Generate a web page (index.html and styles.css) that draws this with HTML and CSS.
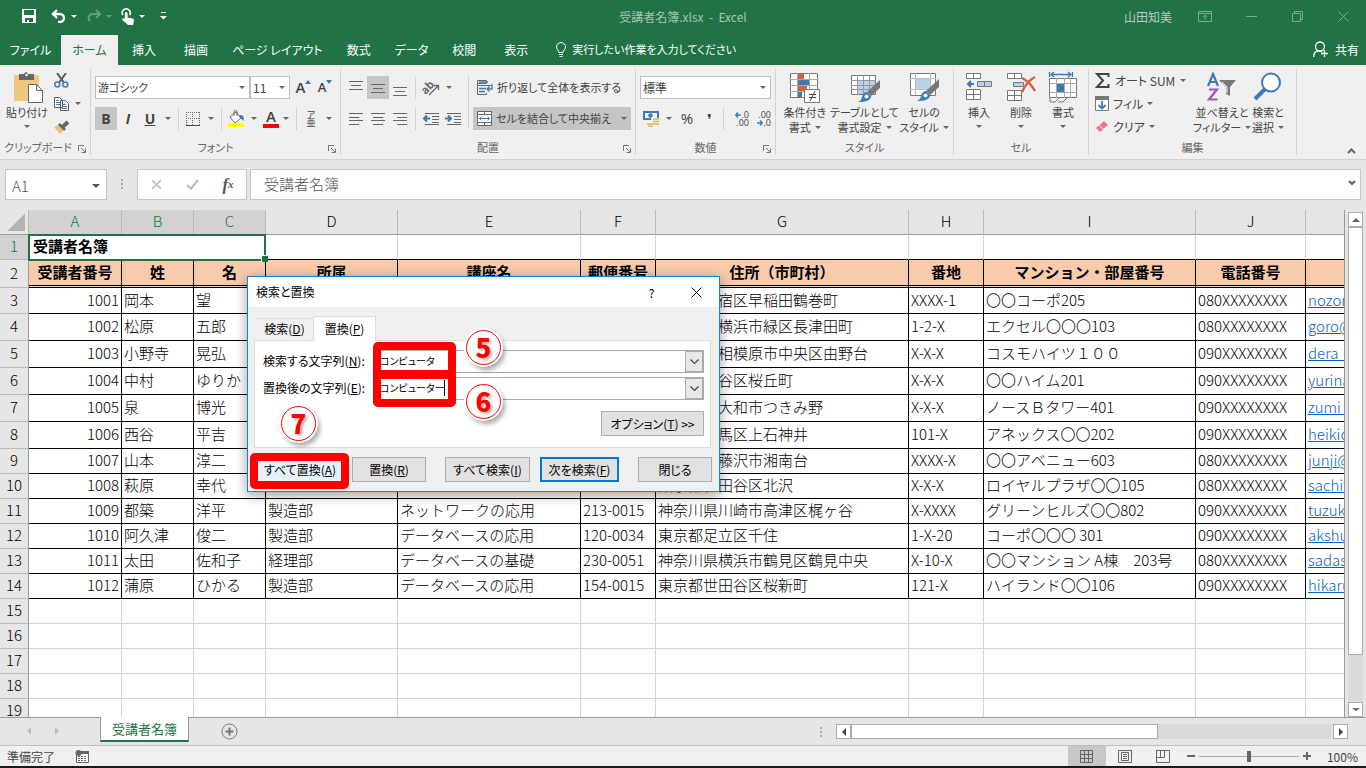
FILE: index.html
```html
<!DOCTYPE html>
<html lang="ja">

<head>
  <meta charset="UTF-8">
  <meta name="viewport" content="width=device-width, initial-scale=1.0">
  <title>受講者名簿.xlsx - Excel</title>
  <link rel="stylesheet" href="styles.css">
</head>

<body>
  <header class="titlebar">
    <div class="quick-access">
      <button title="上書き保存"><svg width="14" height="14" viewBox="0 0 14 14"><path fill="#fff" fill-rule="evenodd" d="M0 0h14v14H0zM2 1v5h10V1zM3 9v4h2v-2h2v2h4V9z"/></svg></button>
      <button title="元に戻す"><svg width="16" height="14" viewBox="0 0 16 14"><path d="M6 1L2 5l4 4M2 5h7a4 4 0 0 1 0 8H7" fill="none" stroke="#fff" stroke-width="2.4"/></svg><i class="arrow"></i></button>
      <button class="faded" title="やり直し"><svg width="16" height="14" viewBox="0 0 16 14"><path d="M10 1l4 4-4 4M14 5H7a4 4 0 0 0-3 7" fill="none" stroke="#fff" stroke-width="2"/></svg><i class="arrow"></i></button>
      <button title="タッチ/マウス モードの切り替え"><svg width="14" height="17" viewBox="0 0 14 17"><path d="M1.800 7a4 4 0 1 1 6.800 0" fill="none" stroke="#fff" stroke-width="1.600"/><path d="M3.800 5q1.400-2 2.800 0v4.500l5 1q1.400.3 1.400 2L12 17H7l-6-5.500 1-1.500 1.800 1z" fill="#fff"/></svg><i class="arrow"></i></button>
      <button title="カスタマイズ"><svg width="7" height="8" viewBox="0 0 7 8"><path d="M1 0h5v1H1zM0 4h7L3.500 7.500z" fill="#fff"/></svg></button>
    </div>
    <div class="window-title">受講者名簿.xlsx&nbsp; -&nbsp; Excel</div>
    <div class="window-buttons">
      <span class="user">山田知美</span>
      <button title="リボンの表示オプション"><svg width="14" height="11" viewBox="0 0 14 11"><path d="M.5.5h13v10H.5zM1 2.500h12M7 9V4M5 6l2-2 2 2" fill="none" stroke="currentColor"/></svg></button>
      <button title="最小化"><svg width="11" height="11" viewBox="0 0 11 11"><path d="M0 5.500h11" stroke="currentColor"/></svg></button>
      <button title="元に戻す (縮小)"><svg width="11" height="11" viewBox="0 0 11 11"><path d="M.5 2.500h8v8h-8zM2.500 2V.5h8v8H9" fill="none" stroke="currentColor"/></svg></button>
      <button title="閉じる"><svg width="11" height="11" viewBox="0 0 11 11"><path d="M.5.5l10 10M10.500.5l-10 10" stroke="currentColor"/></svg></button>
    </div>
  </header>

  <nav class="tabs">
    <button>ファイル</button>
    <button class="active">ホーム</button>
    <button>挿入</button>
    <button>描画</button>
    <button>ページ レイアウト</button>
    <button>数式</button>
    <button>データ</button>
    <button>校閲</button>
    <button>表示</button>
    <button class="tell-me"><svg width="10" height="15" viewBox="0 0 10 15"><path d="M3 10.500c0-2-2.500-3-2.500-5.500a4.500 4.500 0 0 1 9 0c0 2.500-2.500 3.500-2.500 5.500zM3 12.500h4M3.500 14.500h3" fill="none" stroke="#fff"/></svg>実行したい作業を入力してください</button>
    <button class="share"><svg width="16" height="17" viewBox="0 0 16 17"><circle cx="7" cy="5.500" r="4.500" fill="none" stroke="#fff" stroke-width="1.300"/><path d="M.7 16c0-4 2-6 5-6 1.500 0 2.500.4 3.500 1M11.500 9v7M8 12.500h7" fill="none" stroke="#fff" stroke-width="1.300"/></svg>共有</button>
  </nav>

  <section class="ribbon">
    <div class="group clipboard">
      <div class="group-body">
        <button class="big paste">
          <svg width="32" height="32" viewBox="0 0 32 32"><path d="M3 4h25v26H3z" fill="#edc87e"/><path d="M8 3h5q2-4 4 0h6v6H8z" fill="#666"/><circle cx="15.500" cy="4" r="1.300" fill="#fff"/><path d="M17.500 13.500h8l6 6v12h-14z" fill="#fff" stroke="#666"/><path d="M25.500 13.500v6h6" fill="none" stroke="#666"/></svg>
          <span>貼り付け</span><i class="arrow"></i>
        </button>
        <div class="stack">
          <button title="切り取り"><svg width="15" height="15" viewBox="0 0 15 15"><path d="M3 0l6.500 9M12 0L5.500 9" stroke="#5b5b5b" stroke-width="2"/><circle cx="3.200" cy="11.500" r="2.500" fill="none" stroke="#3f7ab5" stroke-width="1.500"/><circle cx="11.300" cy="11.500" r="2.500" fill="none" stroke="#3f7ab5" stroke-width="1.500"/></svg></button>
          <button title="コピー"><svg width="15" height="14" viewBox="0 0 15 14"><path d="M.5.5h5l3 3v7h-8zM6.500 3.500h5l3 3v7h-8z" fill="#fff" stroke="#5b5b5b"/><path d="M2 3.500h3M2 5.500h4M2 7.500h4M8 7.500h4M8 9.500h5M8 11.500h5" stroke="#3f7ab5"/></svg><i class="arrow"></i></button>
          <button title="書式のコピー"><svg width="16" height="14" viewBox="0 0 16 14"><path d="M0 7l5-2 5 5-4 4z" fill="#edc07a"/><path d="M5 4l6 6" stroke="#666" stroke-width="2.500"/><path d="M9 6.500l5-4.500" stroke="#666" stroke-width="4"/></svg></button>
        </div>
      </div>
      <div class="group-name">クリップボード<svg class="launcher" width="8" height="8" viewBox="0 0 8 8"><path d="M.5 6V.5H6M3 3l4 4M7.500 3.500v4h-4" fill="none" stroke="#777"/></svg></div>
    </div>

    <div class="group font">
      <div class="group-body rows">
        <div class="row">
          <span class="select font-name"><select aria-label="フォント"><option>游ゴシック</option></select><i class="arrow"></i></span>
          <span class="select font-size"><select aria-label="フォント サイズ"><option>11</option></select><i class="arrow"></i></span>
          <button class="tool grow">A<svg width="6" height="4" viewBox="0 0 6 4"><path d="M0 4l3-4 3 4z" fill="#3f7ab5"/></svg></button>
          <button class="tool grow shrink">A<svg width="6" height="4" viewBox="0 0 6 4"><path d="M0 0h6L3 4z" fill="#3f7ab5"/></svg></button>
        </div>
        <div class="row">
          <button class="tool pressed"><b>B</b></button>
          <button class="tool italic"><b>I</b></button>
          <button class="tool"><b><u>U</u></b></button>
          <button class="drop" aria-label="下線"><i class="arrow"></i></button>
          <span class="sep"></span>
          <button class="tool" title="罫線"><svg width="14" height="14" viewBox="0 0 14 14"><path d="M0 .5h14M0 6.500h14M.5 0v13M6.500 0v13M13.500 0v13" stroke="#666" stroke-dasharray="1 1"/><path d="M0 13.500h14" stroke="#444"/></svg></button>
          <button class="drop" aria-label="罫線"><i class="arrow"></i></button>
          <span class="sep"></span>
          <button class="tool" title="塗りつぶしの色"><svg width="17" height="17" viewBox="0 0 17 17"><path d="M2 7l6-5 5 6-6 5z" fill="#fff" stroke="#666"/><path d="M6 6V2a1.500 1.500 0 0 1 3 0v4" fill="none" stroke="#666"/><path d="M11 5q6-1 4.500 6l-3-3z" fill="#3f7ab5"/><path d="M0 13h16v4H0z" fill="#ff0"/></svg></button>
          <button class="drop" aria-label="塗りつぶしの色"><i class="arrow"></i></button>
          <button class="tool font-color" title="フォントの色">A</button>
          <button class="drop" aria-label="フォントの色"><i class="arrow"></i></button>
          <span class="sep"></span>
          <button class="tool ruby"><span>ア</span><span>亜</span></button>
          <button class="drop" aria-label="ふりがな"><i class="arrow"></i></button>
        </div>
      </div>
      <div class="group-name">フォント<svg class="launcher" width="8" height="8" viewBox="0 0 8 8"><path d="M.5 6V.5H6M3 3l4 4M7.500 3.500v4h-4" fill="none" stroke="#777"/></svg></div>
    </div>

    <div class="group alignment">
      <div class="group-body">
        <div class="rows">
          <div class="row">
            <button class="tool" title="上揃え"><svg width="14" height="16" viewBox="0 0 14 16"><path d="M0 1.500h14M2 5.500h10M0 9.500h14" stroke="#666"/></svg></button>
            <button class="tool pressed" title="上下中央揃え"><svg width="14" height="16" viewBox="0 0 14 16"><path d="M0 4.500h14M2 8.500h10M0 12.500h14" stroke="#666"/></svg></button>
            <button class="tool" title="下揃え"><svg width="14" height="16" viewBox="0 0 14 16"><path d="M0 7.500h14M2 11.500h10M0 15.500h14" stroke="#666"/></svg></button>
            <span class="sep"></span>
            <button class="tool" title="方向"><svg class="orientation" width="17" height="16" viewBox="0 0 17 16"><text x="0" y="11" transform="rotate(-45 6 10)" font-size="11" font-weight="700" fill="#666">ab</text><path d="M6 15l9-9M11 5.500h4.500V10" fill="none" stroke="#666" stroke-width="1.300"/></svg></button>
            <button class="drop" aria-label="方向"><i class="arrow"></i></button>
          </div>
          <div class="row">
            <button class="tool" title="左揃え"><svg width="14" height="12" viewBox="0 0 14 12"><path d="M0 .5h14M0 4.500h10M0 7.500h14M0 11.500h10" stroke="#666"/></svg></button>
            <button class="tool" title="中央揃え"><svg width="14" height="12" viewBox="0 0 14 12"><path d="M0 .5h14M2 4.500h10M0 7.500h14M2 11.500h10" stroke="#666"/></svg></button>
            <button class="tool" title="右揃え"><svg width="14" height="12" viewBox="0 0 14 12"><path d="M0 .5h14M4 4.500h10M0 7.500h14M4 11.500h10" stroke="#666"/></svg></button>
            <span class="sep"></span>
            <button class="tool" title="インデントを減らす"><svg width="16" height="14" viewBox="0 0 16 14"><path d="M2 1.500h14M9 4.500h7M9 7.500h7M9 10.500h7M2 12.500h14" stroke="#666"/><path d="M7 6.500H1M4 3.500l-3 3 3 3" fill="none" stroke="#3f7ab5" stroke-width="2"/></svg></button>
            <button class="tool" title="インデントを増やす"><svg width="16" height="14" viewBox="0 0 16 14"><path d="M2 1.500h14M9 4.500h7M9 7.500h7M9 10.500h7M2 12.500h14" stroke="#666"/><path d="M0 6.500h6M3 3.500l3 3-3 3" fill="none" stroke="#3f7ab5" stroke-width="2"/></svg></button>
          </div>
        </div>
        <span class="sep tall"></span>
        <div class="rows wide">
          <button class="labelled"><svg width="16" height="16" viewBox="0 0 16 16"><path d="M.5.500h9v3h-9zM.5 7V14.500h9V13" fill="none" stroke="#666"/><path d="M0 5.500h14M.5 3v8" stroke="#666"/><path d="M2 2h9M2 8.500h7M2 11.500h6M15 4v5h-4M12.500 6.500L10 9l2.500 2.500" fill="none" stroke="#3f7ab5" stroke-width="1.300"/></svg>折り返して全体を表示する</button>
          <button class="labelled pressed"><svg width="15" height="15" viewBox="0 0 15 15"><path d="M.5.5h14v14H.5zM0 3.500h15M0 11.500h15M7.500 0v3.500M7.500 11.500V15" fill="#fff" stroke="#666"/><path d="M2 7.500h11M4.500 5.500l-2 2 2 2M10.500 5.500l2 2-2 2" fill="none" stroke="#3f7ab5"/></svg>セルを結合して中央揃え<i class="arrow"></i></button>
        </div>
      </div>
      <div class="group-name">配置<svg class="launcher" width="8" height="8" viewBox="0 0 8 8"><path d="M.5 6V.5H6M3 3l4 4M7.500 3.500v4h-4" fill="none" stroke="#777"/></svg></div>
    </div>

    <div class="group number">
      <div class="group-body rows">
        <div class="row">
          <span class="select format"><select aria-label="表示形式"><option>標準</option></select><i class="arrow"></i></span>
        </div>
        <div class="row">
          <button class="tool" title="通貨表示形式"><svg width="17" height="16" viewBox="0 0 17 16"><path d="M0 0h16v9H0z" fill="#3f7ab5"/><path d="M2 2h12v5H2z" fill="#fff"/><circle cx="7.500" cy="4.500" r="2.300" fill="#3f7ab5"/><path d="M8 7h8v9H4v-4h4z" fill="#f0f0f0"/><path d="M10 8h6M10 10.500h6M10 13h6M4 13h6M5 15.200h5" stroke="#e5b25d" stroke-width="1.600"/></svg></button>
          <button class="drop" aria-label="通貨"><i class="arrow"></i></button>
          <button class="tool percent">%</button>
          <button class="tool comma">❜</button>
          <span class="sep"></span>
          <button class="tool decimal"><span><svg width="6" height="6" viewBox="0 0 6 6"><path d="M6 3H1M3 .5L.7 3 3 5.500" fill="none" stroke="#3f7ab5" stroke-width="1.400"/></svg>.0</span><span>.00</span></button>
          <button class="tool decimal"><span>.00</span><span><svg width="6" height="6" viewBox="0 0 6 6"><path d="M0 3h5M3 .5L5.300 3 3 5.500" fill="none" stroke="#3f7ab5" stroke-width="1.400"/></svg>.0</span></button>
        </div>
      </div>
      <div class="group-name">数値<svg class="launcher" width="8" height="8" viewBox="0 0 8 8"><path d="M.5 6V.5H6M3 3l4 4M7.500 3.500v4h-4" fill="none" stroke="#777"/></svg></div>
    </div>

    <div class="group styles">
      <div class="group-body">
        <button class="big">
          <svg width="32" height="32" viewBox="0 0 32 32"><path d="M1.500 2.500h27v24h-27z" fill="#fff" stroke="#777"/><path d="M1 8.500h28M1 14.500h28M1 20.500h28M8.500 2v24M20.500 2v24" stroke="#aaa"/><path d="M9 3h6v5H9zM9 15h9v5H9z" fill="#d65f3c"/><path d="M9 9h11v5H9zM9 21h4v5H9z" fill="#3f7ab5"/><path d="M15.500 18.500h15v13h-15z" fill="#fff" stroke="#777"/><path d="M20 23.500h7M20 26.500h7M26 20l-5 10" stroke="#444" fill="none"/></svg>
          <span>条件付き</span><span>書式<i class="arrow"></i></span>
        </button>
        <button class="big mid">
          <svg width="32" height="32" viewBox="0 0 32 32"><path d="M2.500 4.500h24v19h-24z" fill="#fff" stroke="#777"/><path d="M9 10h17v13H9z" fill="#bcd0e8"/><path d="M2 9.500h25M2 14.500h25M2 18.500h25M8.500 4v20M14.500 4v20M20.500 4v20" stroke="#999"/><path d="M31 9v8l-9 8-4-4z" fill="#777"/><path d="M18 21l4 4q0 6-13 6 4-2 4-5 1-5 5-5z" fill="#3f7ab5"/><circle cx="17.500" cy="25.500" r="2" fill="#fff"/></svg>
          <span>テーブルとして</span><span>書式設定<i class="arrow"></i></span>
        </button>
        <button class="big">
          <svg width="32" height="32" viewBox="0 0 32 32"><path d="M2.500 2.500h25v22h-25z" fill="#fff" stroke="#777"/><path d="M2 7.500h26M2 18.500h26M7.500 2v22M22.500 2v22" stroke="#bbb"/><path d="M8 8h14v10H8z" fill="#bcd0e8"/><path d="M31 8v8l-9 8-4-4z" fill="#777"/><path d="M18 20l4 4q0 6-13 6 4-2 4-5 1-5 5-5z" fill="#3f7ab5"/><circle cx="17.500" cy="24.500" r="2" fill="#fff"/></svg>
          <span>セルの</span><span>スタイル<i class="arrow"></i></span>
        </button>
      </div>
      <div class="group-name">スタイル</div>
    </div>

    <div class="group cells">
      <div class="group-body">
        <button class="big narrow">
          <svg width="32" height="32" viewBox="0 0 32 32"><path d="M3.500 2.500h14v5h-14zM10.500 2.500v5M3.500 18.500h14v10h-14zM10.500 18.500v10M3.500 23.500h14" fill="#fff" stroke="#777"/><path d="M14.500 10.500h14v5h-14zM21.500 10.500v5" fill="#bcd0e8" stroke="#777"/><path d="M11 13H5M8 10l-3 3 3 3" fill="none" stroke="#3f7ab5" stroke-width="2"/></svg>
          <span>挿入</span><i class="arrow"></i>
        </button>
        <button class="big narrow">
          <svg width="32" height="32" viewBox="0 0 32 32"><path d="M2.500 2.500h14v5h-14zM9.500 2.500v5M2.500 19.500h14v10h-14zM9.500 19.500v10M2.500 24.500h14" fill="#fff" stroke="#777"/><path d="M8.500 11.500h10v4h-10z" fill="#bcd0e8" stroke="#777"/><path d="M17 7q8 4 13 13M30 6q-8 4-13 15" fill="none" stroke="#d65f3c" stroke-width="2.500"/></svg>
          <span>削除</span><i class="arrow"></i>
        </button>
        <button class="big narrow">
          <svg width="32" height="32" viewBox="0 0 32 32"><path d="M2.500 1v5M25.500 1v5M4 3.500h20M7 1L4 3.500 7 6M21 1l3 2.500L21 6" fill="none" stroke="#3f7ab5" stroke-width="1.300"/><path d="M2.500 7.500h27v19h-27z" fill="#fff" stroke="#777"/><path d="M2 12.500h28M2 21.500h28M9.500 7v20M17.500 7v20M23.500 7v20" stroke="#aaa"/><path d="M10 13h7v8h-7z" fill="#3f7ab5"/><path d="M3 27v4h5l4-4M11 31h5l4-4" fill="none" stroke="#777"/></svg>
          <span>書式</span><i class="arrow"></i>
        </button>
      </div>
      <div class="group-name">セル</div>
    </div>

    <div class="group editing">
      <div class="group-body">
        <div class="stack">
          <button><svg width="15" height="15" viewBox="0 0 15 15"><path d="M13.500 4V1H2l6 6.500L2 14h11.500v-3" fill="none" stroke="#444" stroke-width="2"/></svg>オート SUM<i class="arrow"></i></button>
          <button><svg width="14" height="15" viewBox="0 0 14 15"><path d="M.5.5h13v14H.5z" fill="#fff" stroke="#777"/><path d="M0 0h14v4H0z" fill="#777"/><path d="M7 5v8M3.500 9L7 12.500 10.500 9" fill="none" stroke="#3f7ab5" stroke-width="1.800"/></svg>フィル<i class="arrow"></i></button>
          <button><svg width="14" height="13" viewBox="0 0 14 13"><path d="M1 8l8-7 4 4-8 7z" fill="#e8798d"/><path d="M4 5l4.500 4.500" stroke="#f0f0f0"/></svg>クリア<i class="arrow"></i></button>
        </div>
        <button class="big">
          <svg width="32" height="32" viewBox="0 0 32 32"><path d="M2 15L7 3l5 12M4 11h6" fill="none" stroke="#3f7ab5" stroke-width="2.200"/><path d="M3 18.500h8L3 28.500h8.500" fill="none" stroke="#9b59b6" stroke-width="2.200"/><path d="M13 9h17l-6 7v9l-4-2v-7z" fill="#777"/><path d="M16 11l5 5v6" stroke="#fff" fill="none"/></svg>
          <span>並べ替えと</span><span>フィルター<i class="arrow"></i></span>
        </button>
        <button class="big narrow">
          <svg width="32" height="32" viewBox="0 0 32 32"><path d="M3 28l10-10" stroke="#3f7ab5" stroke-width="4"/><circle cx="19" cy="11.500" r="9" fill="#fff" stroke="#3f7ab5" stroke-width="2"/></svg>
          <span>検索と</span><span>選択<i class="arrow"></i></span>
        </button>
      </div>
      <div class="group-name">編集</div>
    </div>
    <button class="collapse" title="リボンを折りたたむ"><svg width="9" height="6" viewBox="0 0 9 6"><path d="M1 5l3.500-3.500L8 5" fill="none" stroke="#666" stroke-width="2"/></svg></button>
  </section>

  <section class="formula-bar">
    <div class="name-box"><input type="text" aria-label="名前ボックス" value="A1"><i class="arrow"></i></div>
    <span class="dots"></span>
    <div class="formula-buttons">
      <button title="キャンセル"><svg width="11" height="11" viewBox="0 0 11 11"><path d="M1 1l9 9M10 1l-9 9" stroke="#bbb" stroke-width="1.500"/></svg></button>
      <button title="入力"><svg width="13" height="11" viewBox="0 0 13 11"><path d="M1 6l4 3.500L12 1" fill="none" stroke="#bbb" stroke-width="2"/></svg></button>
      <button class="fx" title="関数の挿入">f<small>x</small></button>
    </div>
    <div class="formula-input"><input type="text" aria-label="数式バー" value="受講者名簿"><svg width="8" height="6" viewBox="0 0 8 6"><path d="M1 1l3 3 3-3" fill="none" stroke="#666" stroke-width="2"/></svg></div>
  </section>

  <main class="sheet">
    <div class="grid">
      <table>
        <colgroup>
          <col class="c-head"><col class="c-a"><col class="c-b"><col class="c-b"><col class="c-d"><col class="c-e"><col class="c-f"><col class="c-g"><col class="c-f"><col class="c-i"><col class="c-j"><col class="c-k">
        </colgroup>
        <thead>
          <tr>
            <th class="corner"></th>
            <th class="selected">A</th><th class="selected">B</th><th class="selected">C</th>
            <th>D</th><th>E</th><th>F</th><th>G</th><th>H</th><th>I</th><th>J</th><th></th>
          </tr>
        </thead>
        <tbody>
          <tr class="title-row"><th class="selected">1</th><td class="active-cell" colspan="3">受講者名簿</td><td></td><td></td><td></td><td></td><td></td><td></td><td></td><td></td></tr>
          <tr class="heading-row"><th>2</th><td>受講者番号</td><td>姓</td><td>名</td><td>所属</td><td>講座名</td><td>郵便番号</td><td>住所（市町村）</td><td>番地</td><td>マンション・部屋番号</td><td>電話番号</td><td></td></tr>
          <tr class="data third"><th>3</th><td>1001</td><td>岡本</td><td>望</td><td></td><td></td><td></td><td>東京都新宿区早稲田鶴巻町</td><td>XXXX-1</td><td>〇〇コーポ205</td><td>080XXXXXXXX</td><td><a href="#">nozomi@</a></td></tr>
          <tr class="data high"><th>4</th><td>1002</td><td>松原</td><td>五郎</td><td></td><td></td><td></td><td>神奈川県横浜市緑区長津田町</td><td>1-2-X</td><td>エクセル〇〇〇103</td><td>080XXXXXXXX</td><td><a href="#">goro@</a></td></tr>
          <tr class="data high"><th>5</th><td>1003</td><td>小野寺</td><td>晃弘</td><td></td><td></td><td></td><td>神奈川県相模原市中央区由野台</td><td>X-X-X</td><td>コスモハイツ１００</td><td>090XXXXXXXX</td><td><a href="#">dera_a</a></td></tr>
          <tr class="data high"><th>6</th><td>1004</td><td>中村</td><td>ゆりか</td><td></td><td></td><td></td><td>東京都渋谷区桜丘町</td><td>X-X-X</td><td>〇〇ハイム201</td><td>090XXXXXXXX</td><td><a href="#">yurina@</a></td></tr>
          <tr class="data high"><th>7</th><td>1005</td><td>泉</td><td>博光</td><td></td><td></td><td></td><td>神奈川県大和市つきみ野</td><td>X-X-X</td><td>ノースＢタワー401</td><td>090XXXXXXXX</td><td><a href="#">zumi_h</a></td></tr>
          <tr class="data high"><th>8</th><td>1006</td><td>西谷</td><td>平吉</td><td></td><td></td><td></td><td>東京都練馬区上石神井</td><td>101-X</td><td>アネックス〇〇202</td><td>090XXXXXXXX</td><td><a href="#">heikichi</a></td></tr>
          <tr class="data"><th>9</th><td>1007</td><td>山本</td><td>淳二</td><td></td><td></td><td></td><td>神奈川県藤沢市湘南台</td><td>XXXX-X</td><td>〇〇アベニュー603</td><td>080XXXXXXXX</td><td><a href="#">junji@</a></td></tr>
          <tr class="data"><th>10</th><td>1008</td><td>萩原</td><td>幸代</td><td></td><td></td><td></td><td>東京都世田谷区北沢</td><td>X-X-X</td><td>ロイヤルプラザ〇〇105</td><td>080XXXXXXXX</td><td><a href="#">sachiyo</a></td></tr>
          <tr class="data"><th>11</th><td>1009</td><td>都築</td><td>洋平</td><td>製造部</td><td>ネットワークの応用</td><td>213-0015</td><td>神奈川県川崎市高津区梶ヶ谷</td><td>X-XXXX</td><td>グリーンヒルズ〇〇802</td><td>090XXXXXXXX</td><td><a href="#">tuzuki@</a></td></tr>
          <tr class="data"><th>12</th><td>1010</td><td>阿久津</td><td>俊二</td><td>製造部</td><td>データベースの応用</td><td>120-0034</td><td>東京都足立区千住</td><td>1-X-20</td><td>コーポ〇〇〇 301</td><td>090XXXXXXXX</td><td><a href="#">akshun</a></td></tr>
          <tr class="data"><th>13</th><td>1011</td><td>太田</td><td>佐和子</td><td>経理部</td><td>データベースの基礎</td><td>230-0051</td><td>神奈川県横浜市鶴見区鶴見中央</td><td>X-10-X</td><td>〇〇マンション A棟　203号</td><td>080XXXXXXXX</td><td><a href="#">sadasa</a></td></tr>
          <tr class="data"><th>14</th><td>1012</td><td>蒲原</td><td>ひかる</td><td>製造部</td><td>データベースの応用</td><td>154-0015</td><td>東京都世田谷区桜新町</td><td>121-X</td><td>ハイランド〇〇106</td><td>090XXXXXXXX</td><td><a href="#">hikaru@</a></td></tr>
          <tr><th>15</th><td></td><td></td><td></td><td></td><td></td><td></td><td></td><td></td><td></td><td></td><td></td></tr>
          <tr><th>16</th><td></td><td></td><td></td><td></td><td></td><td></td><td></td><td></td><td></td><td></td><td></td></tr>
          <tr><th>17</th><td></td><td></td><td></td><td></td><td></td><td></td><td></td><td></td><td></td><td></td><td></td></tr>
          <tr><th>18</th><td></td><td></td><td></td><td></td><td></td><td></td><td></td><td></td><td></td><td></td><td></td></tr>
          <tr><th>19</th><td></td><td></td><td></td><td></td><td></td><td></td><td></td><td></td><td></td><td></td><td></td></tr>
        </tbody>
      </table>
    </div>
    <div class="vscroll">
      <button aria-label="上へ"><i class="arrow up"></i></button>
      <div class="track"><div class="thumb"></div></div>
      <button aria-label="下へ"><i class="arrow"></i></button>
    </div>
  </main>

  <div class="sheet-tabs">
    <div class="sheet-nav"><i class="arrow left"></i><i class="arrow right"></i></div>
    <button class="sheet-tab">受講者名簿</button>
    <div class="sheet-rest">
      <button class="add-sheet" title="新しいシート"><svg width="17" height="17" viewBox="0 0 17 17"><circle cx="8.500" cy="8.500" r="7.500" fill="none" stroke="#777"/><path d="M4.500 8.500h8M8.500 4.500v8" stroke="#777" stroke-width="2"/></svg></button>
      <span class="dots"></span>
      <div class="hscroll">
        <button aria-label="左へ"><i class="arrow left"></i></button>
        <div class="track"><div class="thumb"></div></div>
        <button aria-label="右へ"><i class="arrow right"></i></button>
      </div>
    </div>
  </div>

  <footer class="status-bar">
    <span>準備完了</span>
    <svg class="macro" width="14" height="13" viewBox="0 0 14 13"><path d="M1.500 5v7.500h12v-11H6" fill="#fff" stroke="#666"/><path d="M6 1h8v3H6z" fill="#666"/><circle cx="3.500" cy="3" r="3" fill="#666"/><path d="M3 6.500h9M3 8.500h9M3 10.500h9" stroke="#666" stroke-dasharray="2 1"/></svg>
    <div class="views">
      <button class="current" title="標準"><svg width="13" height="13" viewBox="0 0 13 13"><path d="M.5.5h12v12H.5zM4.500 0v13M8.500 0v13M0 4.500h13M0 8.500h13" fill="none" stroke="#666"/></svg></button>
      <button title="ページ レイアウト"><svg width="14" height="13" viewBox="0 0 14 13"><path d="M.5.5h13v12H.5zM3.500 2.500h7v8h-7zM5 4.500h4M5 6.500h4M5 8.500h4" fill="none" stroke="#666"/></svg></button>
      <button title="改ページ プレビュー"><svg width="14" height="13" viewBox="0 0 14 13"><path d="M.5.5h13v12H.5zM4.500 0v7M8.500 0v7M0 7.500h8.500V0" fill="none" stroke="#666"/></svg></button>
    </div>
    <div class="zoom">
      <button class="minus" aria-label="縮小"></button>
      <input type="range" aria-label="ズーム" min="0" max="200" value="100">
      <button class="plus" aria-label="拡大"></button>
      <span class="percent">100%</span>
    </div>
  </footer>

  <div class="dialog" role="dialog" aria-label="検索と置換">
    <div class="dialog-title">
      <h2>検索と置換</h2>
      <button aria-label="ヘルプ">?</button>
      <button aria-label="閉じる"><svg width="11" height="11" viewBox="0 0 11 11"><path d="M.5.5l10 10M10.500.5l-10 10" stroke="#000"/></svg></button>
    </div>
    <div class="dialog-tabs">
      <button>検索(<u>D</u>)</button>
      <button class="active">置換(<u>P</u>)</button>
    </div>
    <div class="dialog-panel">
      <div class="field">
        <label for="find-text">検索する文字列(<u>N</u>):</label>
        <div class="combo"><input type="text" id="find-text" value="コンピュータ"><button aria-label="検索履歴"><svg width="9" height="6" viewBox="0 0 9 6"><path d="M.5.5l4 4 4-4" fill="none" stroke="#444" stroke-width="1.200"/></svg></button></div>
      </div>
      <div class="field">
        <label for="replace-text">置換後の文字列(<u>E</u>):</label>
        <div class="combo"><input type="text" id="replace-text" value="コンピューター"><i class="text-cursor"></i><button aria-label="置換履歴"><svg width="9" height="6" viewBox="0 0 9 6"><path d="M.5.5l4 4 4-4" fill="none" stroke="#444" stroke-width="1.200"/></svg></button></div>
      </div>
      <button class="push options">オプション(<u>T</u>) &gt;&gt;</button>
    </div>
    <div class="dialog-buttons">
      <button class="push hot">すべて置換(<u>A</u>)</button>
      <button class="push">置換(<u>R</u>)</button>
      <button class="push find-all">すべて検索(<u>I</u>)</button>
      <button class="push default">次を検索(<u>F</u>)</button>
      <button class="push close">閉じる</button>
    </div>
    <!-- step callouts -->
    <div class="frame frame-5"></div>
    <div class="frame frame-6"></div>
    <div class="frame frame-7"></div>
    <div class="step step-5">5</div>
    <div class="step step-6">6</div>
    <div class="step step-7">7</div>
  </div>
</body>

</html>
```
FILE: styles.css
```css
* {
  box-sizing: border-box;
}

body,
html {
  margin: 0;
  height: 100%;
  overflow: hidden;
}

body {
  display: flex;
  flex-direction: column;
  position: relative;
  background-color: #e6e6e6;
  border-bottom: 2px solid #1a1a1a;
  color: #444;
  font-family: "Noto Sans CJK JP", sans-serif;
  font-size: 12px;
  line-height: 15px;
  font-feature-settings: "palt";
}

button,
input,
select {
  margin: 0;
  padding: 0;
  border: 0;
  background: none;
  color: inherit;
  font: inherit;
  font-feature-settings: inherit;
}

button {
  display: flex;
  align-items: center;
  justify-content: center;
  white-space: nowrap;
}

svg {
  display: block;
  flex: none;
}

.arrow {
  flex: none;
  width: 0;
  height: 0;
  border: 3px solid transparent;
  border-top-color: currentColor;
  border-bottom-width: 0;
}

.arrow.up {
  border-width: 0 4px 4px;
  border-bottom-color: currentColor;
}

.arrow.left {
  border-width: 4px 4px 4px 0;
  border-right-color: currentColor;
  border-top-color: transparent;
}

.arrow.right {
  border-width: 4px 0 4px 4px;
  border-left-color: currentColor;
  border-top-color: transparent;
}

/* title bar */
.titlebar {
  flex: none;
  display: grid;
  grid-template-columns: 1fr auto 1fr;
  align-items: center;
  height: 35px;
  padding-bottom: 3px;
  background-color: #217346;
  color: #fff;
}

.quick-access {
  display: flex;
  gap: 9px;
  padding-left: 22px;
}

.quick-access button {
  gap: 4px;
}

.quick-access button:first-child {
  margin-right: 6px;
}

.quick-access button:last-child {
  margin-left: 6px;
}

.quick-access .faded {
  opacity: 0.3;
}

.window-title {
  color: #a6c7b5;
}

.window-buttons {
  display: flex;
  justify-content: flex-end;
  align-items: center;
  height: 30px;
  color: #7aab8f;
}

.window-buttons button {
  width: 46px;
  height: 30px;
}

.user {
  margin-right: 10px;
  color: #b5d0c1;
}

/* ribbon tabs */
.tabs {
  flex: none;
  display: flex;
  height: 30px;
  background-color: #217346;
  color: #fff;
}

.tabs button {
  padding: 0 14px 2px;
}

.tabs button:first-child {
  width: 61px;
}

.tabs .active {
  width: 57px;
  background-color: #f0f0f0;
  color: #217346;
}

.tabs button:nth-child(5),
.tabs button:nth-child(7) {
  padding: 0 10px 2px;
}

.tabs .tell-me {
  gap: 6px;
  font-size: 11px;
}

.tabs .share {
  gap: 6px;
  margin-left: auto;
  padding: 0 7px 2px;
}

/* ribbon */
.ribbon {
  flex: none;
  display: flex;
  height: 95px;
  padding-top: 4px;
  background-color: #f0f0f0;
  border-bottom: 1px solid #d2d2d2;
}

.ribbon .arrow {
  color: #666;
}

.group {
  display: flex;
  flex-direction: column;
  height: 86px;
  padding: 0 4px;
  border-right: 1px solid #d2d2d2;
}

.group-body {
  flex: 1;
  display: flex;
}

.group-name {
  position: relative;
  height: 15px;
  color: #666;
  font-size: 11px;
  text-align: center;
}

.launcher {
  position: absolute;
  right: 0;
  top: 5px;
}

.clipboard {
  width: 91px;
}

.clipboard .group-name {
  padding-right: 14px;
}

.font {
  width: 250px;
}

.alignment {
  width: 295px;
}

.number {
  width: 140px;
}

.styles {
  width: 178px;
}

.cells {
  width: 135px;
}

.editing {
  width: 208px;
}

.big {
  flex-direction: column;
  justify-content: flex-start;
  width: 50px;
  padding-top: 2px;
  font-size: 11px;
}

.big svg {
  margin-bottom: 2px;
}

.big > span {
  display: flex;
  align-items: center;
  gap: 4px;
}

.big > .arrow {
  margin-top: 5px;
}

.big.mid {
  width: 70px;
}

.big.narrow {
  width: 42px;
}

.paste {
  width: 46px;
}

.stack {
  display: flex;
  flex-direction: column;
}

.stack button {
  justify-content: flex-start;
  gap: 6px;
  height: 23px;
  padding-left: 4px;
}

.editing .stack {
  width: 104px;
}

.editing .stack button {
  gap: 4px;
  padding-left: 2px;
}

.editing .stack button:first-child {
  gap: 5px;
}

.rows {
  display: flex;
  flex-direction: column;
  gap: 8px;
  padding-top: 7px;
}

.row {
  display: flex;
  align-items: center;
  height: 23px;
}

.tool {
  width: 22px;
  height: 23px;
}

.drop {
  width: 14px;
  height: 23px;
}

.pressed {
  background-color: #c5c5c5;
}

.tool b {
  font-family: "Open Sans", sans-serif;
  font-size: 14px;
}

.italic {
  font-style: italic;
}

.sep {
  width: 1px;
  height: 22px;
  margin: 0 3px;
  background-color: #d2d2d2;
}

.alignment .sep {
  margin: 0 4px;
}

.alignment .sep.tall {
  height: 52px;
  margin-top: 7px;
}

.orientation {
  overflow: visible;
}

.select {
  position: relative;
  height: 23px;
  border: 1px solid #c0c0c0;
  background-color: #fff;
}

.select select {
  width: 100%;
  height: 100%;
  padding-left: 2px;
  padding-bottom: 1px;
  appearance: none;
}

.select .arrow {
  position: absolute;
  right: 4px;
  top: 9px;
}

.font-name {
  width: 157px;
}

.font-name select {
  font-size: 11px;
}

.font-size {
  width: 40px;
}

.format {
  width: 131px;
}

.grow {
  align-items: center;
  margin-left: 3px;
  font-family: "Open Sans", sans-serif;
  font-size: 15px;
  font-weight: 600;
}

.grow svg {
  align-self: flex-start;
  margin-top: 4px;
}

.shrink {
  margin-left: 0;
  font-size: 13px;
}

.font-color {
  width: 16px;
  height: 19px;
  margin-left: 2px;
  border-bottom: 4px solid #f00;
  font-family: "Open Sans", sans-serif;
  font-size: 15px;
  font-weight: 600;
}

.ruby {
  flex-direction: column;
  font-size: 9px;
  line-height: 8px;
}

.labelled {
  justify-content: flex-start;
  gap: 4px;
  height: 23px;
  padding: 0 4px;
  font-size: 11px;
}

.labelled .arrow {
  margin-left: auto;
}

.wide {
  flex: 1;
}

.tool.percent {
  font-family: "Open Sans", sans-serif;
  font-size: 15px;
}

.comma {
  font-size: 15px;
}

.decimal {
  flex-direction: column;
  align-items: flex-end;
  font-family: "Open Sans", sans-serif;
  font-size: 9px;
  line-height: 8px;
}

.decimal span {
  display: flex;
  align-items: center;
}

.collapse {
  align-self: flex-end;
  margin: 0 10px 5px auto;
}

/* formula bar */
.formula-bar {
  flex: none;
  display: flex;
  padding: 9px 5px 10px;
  color: #555;
}

.name-box,
.formula-buttons,
.formula-input {
  display: flex;
  align-items: center;
  height: 31px;
  border: 1px solid #c6c6c6;
  background-color: #fff;
}

.name-box {
  width: 102px;
  padding: 2px 6px 0;
  font-size: 15px;
  font-weight: 300;
}

.name-box input {
  flex: 1;
  min-width: 0;
}

.name-box .arrow {
  border-width: 4px 4px 0;
}

.dots {
  width: 2px;
  height: 10px;
  margin: 10px 14px;
  background: repeating-linear-gradient(#aaa 0 2px, transparent 2px 4px);
}

.formula-buttons {
  width: 110px;
  margin-right: 3px;
}

.formula-buttons button {
  flex: 1;
}

.fx {
  font-family: "Liberation Serif", serif;
  font-size: 17px;
  font-style: italic;
  font-weight: 700;
}

.fx small {
  font-size: 11px;
}

.formula-input {
  flex: 1;
  padding: 0 4px 3px 13px;
  font-size: 15px;
  font-weight: 300;
}

.formula-input input {
  flex: 1;
}

/* worksheet */
.sheet {
  flex: 1;
  min-height: 0;
  display: flex;
}

.grid {
  flex: 1;
  min-width: 0;
  overflow: hidden;
  border-right: 1px solid #999;
}

.grid table {
  width: 1386px;
  table-layout: fixed;
  border-spacing: 0;
  background-color: #fff;
  color: #000;
  font-size: 15px;
  font-weight: 300;
  line-height: 20px;
  font-feature-settings: normal;
}

.c-head { width: 29px; }
.c-a { width: 93px; }
.c-b { width: 72px; }
.c-d { width: 132px; }
.c-e { width: 183px; }
.c-f { width: 75px; }
.c-g { width: 253px; }
.c-i { width: 212px; }
.c-j { width: 110px; }
.c-k { width: 80px; }

.grid tr {
  height: 25px;
}

.grid th {
  padding: 0 0 2px;
  border-right: 1px solid #999;
  border-bottom: 1px solid #bbb;
  background-color: #e6e6e6;
  font-weight: 300;
}

.grid thead th {
  border-right-color: #bbb;
  border-bottom-color: #999;
}

.grid th.selected {
  background-color: #d2d2d2;
  color: #217346;
}

.grid .corner {
  background: linear-gradient(to bottom right, transparent 50%, #b4b4b4 50%) 8px 4px / 17px 17px no-repeat #e6e6e6;
}

.grid td {
  padding: 0 2px 2px;
  border-right: 1px solid #d4d4d4;
  border-bottom: 1px solid #d4d4d4;
  white-space: nowrap;
}

.grid .title-row td {
  border-bottom-color: #000;
}

.grid .active-cell {
  position: relative;
  padding-left: 4px;
  font-weight: 700;
}

.active-cell::before {
  content: "";
  position: absolute;
  inset: -1px -1px -2px -1px;
  border: 2px solid #217346;
}

.active-cell::after {
  content: "";
  position: absolute;
  right: -3px;
  bottom: -3px;
  width: 6px;
  height: 6px;
  border: 1px solid #fff;
  border-width: 1px 0 0 1px;
  background-color: #217346;
}

.grid .heading-row {
  height: 28px;
}

.grid .heading-row td {
  border-right-color: #000;
  border-bottom: 3px double #000;
  background-color: #f8cbad;
  font-weight: 700;
  text-align: center;
}

.grid .third {
  height: 26px;
}

.grid .high {
  height: 27px;
}

.grid .data td {
  border-color: #000;
}

.grid .data td:nth-child(2) {
  text-align: right;
}

.grid a {
  color: #0563c1;
}

.vscroll {
  display: flex;
  flex-direction: column;
  width: 21px;
  padding: 2px 3px 0;
  color: #666;
}

.vscroll button,
.hscroll button {
  flex: none;
  width: 15px;
  height: 15px;
  border: 1px solid #ababab;
  background-color: #fff;
}

.vscroll .arrow {
  border-left-width: 4px;
  border-right-width: 4px;
}

.track {
  flex: 1;
  background-color: #dadada;
}

.thumb {
  border: 1px solid #ababab;
  background-color: #fff;
}

.vscroll .thumb {
  height: 90%;
}

/* sheet tabs */
.sheet-tabs {
  flex: none;
  display: flex;
  height: 29px;
  border-bottom: 1px solid #c0c0c0;
}

.sheet-nav {
  display: flex;
  gap: 24px;
  width: 100px;
  padding: 9px 27px;
  border-top: 1px solid #999;
  color: #bbb;
}

.sheet-tab {
  width: 89px;
  height: 25px;
  border: 1px solid #999;
  border-width: 0 1px 2px;
  border-bottom-color: #217346;
  background-color: #fff;
  color: #217346;
  font-size: 13px;
}

.sheet-rest {
  flex: 1;
  display: flex;
  align-items: center;
  padding: 0 18px 0 32px;
  border-top: 1px solid #999;
}

.sheet-rest .dots {
  margin-left: auto;
}

.hscroll {
  display: flex;
  width: 45.4%;
}

.hscroll .track {
  margin-right: 2px;
}

.hscroll .thumb {
  width: 64%;
  height: 15px;
}

/* status bar */
.status-bar {
  flex: none;
  display: flex;
  align-items: center;
  height: 20px;
  padding-left: 7px;
  background-color: #f0f0f0;
}

.macro {
  margin-left: 20px;
}

.views {
  display: flex;
  margin-left: auto;
}

.views button {
  width: 38px;
  height: 20px;
}

.views .current {
  background-color: #c8c8c8;
}

.zoom {
  display: flex;
  align-items: center;
  padding: 0 8px 0 5px;
}

.zoom input {
  width: 100px;
  height: 16px;
  margin: 0 4px;
  appearance: none;
  background: linear-gradient(#aaa, #aaa) center / 100% 1px no-repeat;
}

.zoom input::-webkit-slider-thumb {
  appearance: none;
  width: 4px;
  height: 11px;
  background-color: #666;
}

.minus,
.plus {
  width: 8px;
  height: 8px;
  background: linear-gradient(#666, #666) center / 8px 2px no-repeat;
}

.plus {
  background: linear-gradient(#666, #666) center / 8px 2px no-repeat, linear-gradient(#666, #666) center / 2px 8px no-repeat;
}

.zoom .percent {
  margin-left: 16px;
}

/* find and replace dialog */
.dialog {
  position: absolute;
  left: 247px;
  top: 276px;
  width: 473px;
  height: 216px;
  border: 1px solid #1883d7;
  background-color: #f0f0f0;
  box-shadow: 0 3px 12px rgba(0, 0, 0, 0.4);
  color: #000;
}

.dialog-title {
  display: flex;
  height: 30px;
  background-color: #fff;
}

.dialog h2 {
  flex: 1;
  margin: 0;
  padding: 7px 8px;
  font-size: 12px;
  font-weight: 400;
}

.dialog-title button {
  width: 45px;
}

.dialog-tabs {
  display: flex;
  align-items: flex-end;
  height: 33px;
  padding-left: 8px;
}

.dialog-tabs button {
  width: 57px;
  height: 22px;
  padding-bottom: 2px;
  border: 1px solid #dcdcdc;
  border-width: 1px 0 0;
}

.dialog-tabs .active {
  position: relative;
  width: 63px;
  height: 25px;
  margin-bottom: -1px;
  border-width: 1px 1px 0;
  background-color: #fff;
}

.dialog-panel {
  display: flex;
  flex-direction: column;
  gap: 4px;
  height: 108px;
  margin: 0 8px 0 6px;
  padding: 9px 6px 0 8px;
  border: 1px solid #dcdcdc;
  background-color: #fff;
}

.field {
  display: flex;
  align-items: center;
}

.field label {
  width: 112px;
  padding-bottom: 2px;
}

.combo {
  position: relative;
  flex: 1;
  display: flex;
  height: 23px;
  border: 1px solid #ababab;
  background-color: #fff;
}

.combo input {
  flex: 1;
  padding: 0 0 3px 4px;
  font-size: 10px;
}

.combo button {
  width: 18px;
  border: 1px solid #ababab;
  background-color: #e8e8e8;
}

.text-cursor {
  position: absolute;
  left: 68px;
  top: 2px;
  width: 1px;
  height: 16px;
  background-color: #000;
}

.push {
  width: 74px;
  height: 25px;
  padding-bottom: 1px;
  border: 1px solid #adadad;
  background-color: #e1e1e1;
}

.options {
  align-self: flex-end;
  width: 103px;
  margin-top: 7px;
}

.dialog-buttons {
  display: flex;
  padding: 9px 7px 0 8px;
}

.hot {
  width: 88px;
  margin-right: 8px;
  background-color: #e5f1fb;
}

.find-all {
  width: 85px;
  margin: 0 10px 0 19px;
}

.default {
  width: 79px;
  border: 2px solid #0078d7;
}

.close {
  margin-left: auto;
}

.frame {
  position: absolute;
  width: 83px;
  height: 36px;
  border: 8px solid #f00;
  border-radius: 5px;
}

.frame-5 {
  left: 125px;
  top: 65px;
}

.frame-6 {
  left: 125px;
  top: 94px;
}

.frame-7 {
  left: 2px;
  top: 176px;
  width: 99px;
}

.step {
  position: absolute;
  width: 35px;
  height: 35px;
  border: 1px solid #f00;
  border-radius: 50%;
  background-color: #fff;
  box-shadow: 0 0 0 2px #fff, 3px 4px 5px 1px rgba(0, 0, 0, 0.35);
  color: #f00;
  font-family: "Noto Sans CJK JP", sans-serif;
  font-size: 26px;
  font-weight: 900;
  line-height: 31px;
  text-align: center;
  text-shadow: 2px 2px 3px rgba(0, 0, 0, 0.3);
}

.step-5 {
  left: 218px;
  top: 53px;
}

.step-6 {
  left: 218px;
  top: 107px;
}

.step-7 {
  left: 33px;
  top: 129px;
}
```
